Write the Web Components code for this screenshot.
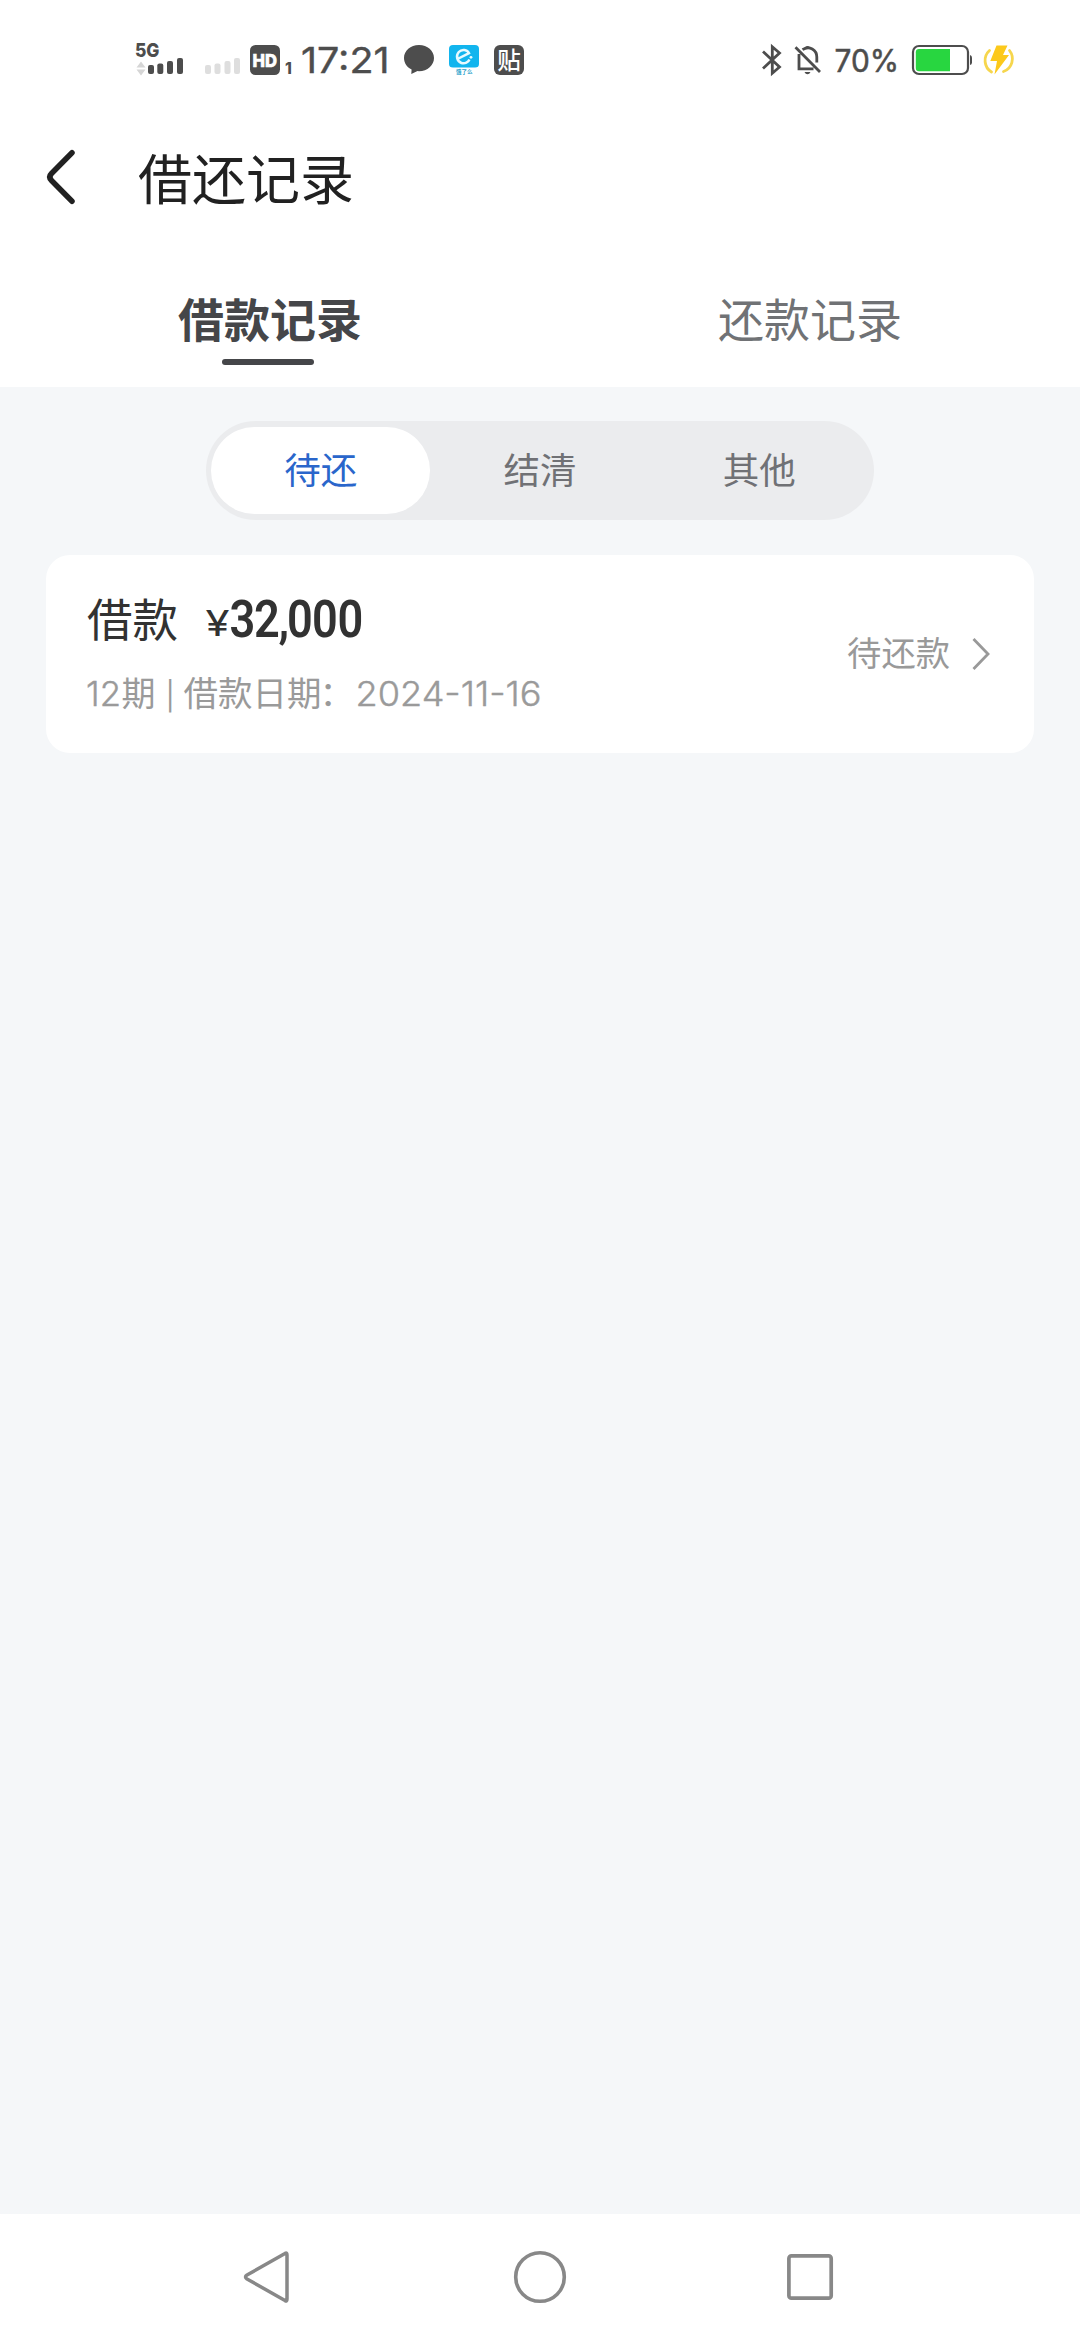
<!DOCTYPE html>
<html lang="zh-CN">
<head>
<meta charset="utf-8">
<title>借还记录</title>
<style>
html,body{margin:0;padding:0;background:#f5f7f9}
body{font-family:Inter,"Noto Sans CJK SC",sans-serif}
</style>
</head>
<body>
<loan-page></loan-page>
<script>
const define = (name, html, init) => customElements.define(name, class extends HTMLElement {
  constructor() {
    super();
    this.attachShadow({mode: 'open'}).innerHTML = html;
  }
  connectedCallback() { if (init) init(this, this.shadowRoot); }
});

define('status-bar', `
<style>
:host{display:flex;height:120px;align-items:flex-start;box-sizing:border-box;padding-top:36px;background:#fff;color:#4d4d4d}
svg{display:block;flex:none;height:48px;font-family:Inter,"Noto Sans CJK SC",sans-serif;overflow:visible}
.left{display:flex;margin-left:130px;flex:1}
.right{display:flex;margin-right:59px}
</style>
<div class="left">
  <svg width="60" viewBox="130 36 60 48" fill="#4d4d4d">
    <text x="135" y="57.300" font-size="19" font-weight="800" textLength="24.500" lengthAdjust="spacingAndGlyphs">5G</text>
    <path d="M136.500 67.500l4.500-6 4.500 6zM136.500 69.500l4.500 6 4.500-6z" fill="#d6d6d6"/>
    <rect x="148" y="65" width="6" height="9" rx="2"/><rect x="157.300" y="63.500" width="6" height="10.500" rx="2"/><rect x="167" y="61" width="6" height="13" rx="2"/><rect x="177" y="58" width="6" height="16" rx="2"/>
  </svg>
  <svg width="55" viewBox="190 36 55 48" fill="#dedede">
    <rect x="205" y="65" width="6" height="9" rx="2"/><rect x="214.500" y="63.500" width="6" height="10.500" rx="2"/><rect x="224.500" y="61" width="6" height="13" rx="2"/><rect x="234" y="58" width="6" height="16" rx="2"/>
  </svg>
  <svg width="55" viewBox="245 36 55 48" fill="#4d4d4d">
    <rect x="250" y="45" width="30" height="30" rx="5.500"/>
    <text x="252.500" y="66.500" fill="#fff" stroke="#fff" stroke-width=".6" font-size="18" font-weight="800" textLength="24.500" lengthAdjust="spacingAndGlyphs">HD</text>
    <text x="285" y="74" font-size="15.500" font-weight="800">1</text>
  </svg>
  <svg width="100" viewBox="300 36 100 48" fill="#4d4d4d">
    <text x="301" y="73" font-size="36" font-weight="400" stroke="#4d4d4d" stroke-width=".4" textLength="88.500" lengthAdjust="spacingAndGlyphs">17:21</text>
  </svg>
  <svg width="45" viewBox="400 36 45 48" fill="#4d4d4d">
    <path d="M419 45c8.500 0 15 5.800 15 13s-6.500 13.200-15 13.200l-1.500-.1-6.200 2.900.3-4.500c-4.700-2.200-7.600-6.500-7.600-11.500 0-7.200 6.500-13 15-13z"/>
  </svg>
  <svg width="45" viewBox="445 36 45 48">
    <path d="M453 45h22q4 0 4 4v15q0 3.500-4 3.500h-22q-4 0-4-3.500V49q0-4 4-4z" fill="#12b5ee"/>
    <path d="M457.500 59l11.500-5.800c-1.600-3.600-7.200-4.600-10.200-1.200-3.200 3.600-1.900 9.400 2.600 11 3.500 1.200 7-.8 8-3.500" fill="none" stroke="#e7faff" stroke-width="2.500"/>
    <circle cx="471" cy="57.300" r="1.400" fill="#e7faff"/>
    <text x="456" y="73.700" fill="#2ba1cb" font-size="5.500" font-weight="700" textLength="16.500">饿了么</text>
  </svg>
  <svg width="40" viewBox="490 36 40 48">
    <rect x="494" y="45" width="30" height="30" rx="6" fill="#4d4d4d"/>
    <text x="497.300" y="68.500" font-size="23.500" font-weight="500" fill="#fff">贴</text>
  </svg>
</div>
<div class="right">
  <svg width="30" viewBox="759 36 30 48" fill="none" stroke="#4d4d4d" stroke-width="2.800">
    <path d="M763 51.500l16.500 15.500-7.200 6.200V46.800l7.200 6.200-16.500 15.500"/>
  </svg>
  <svg width="45" viewBox="789 36 45 48" fill="none" stroke="#4d4d4d" stroke-width="2.800">
    <path d="M795.500 47.300l24.500 24.700M799 54v14.800h14.500M802.500 49.700c7-4.700 14.300.5 14.300 7.300v5.500"/>
    <path d="M804 49q1-3 3.500-3t3.500 3zM804.500 72h6q-1 2.200-3 2.200t-3-2.200z" fill="#4d4d4d" stroke="none"/>
  </svg>
  <svg width="72" viewBox="834 36 72 48" fill="#4d4d4d">
    <text x="834.500" y="72" font-size="30.500" font-weight="400" stroke="#4d4d4d" stroke-width=".5" textLength="64.500" lengthAdjust="spacingAndGlyphs">70%</text>
  </svg>
  <svg width="72" viewBox="906 36 72 48">
    <rect x="913" y="46" width="55" height="28" rx="6" fill="#fff" stroke="#4d4d4d" stroke-width="2.200"/>
    <path d="M919 49h31v22.300h-31q-3.200 0-3.200-3.200V52.200q0-3.200 3.200-3.200z" fill="#28d640"/>
    <path d="M970 55q2 .5 2 2.500v5q0 2-2 2.500z" fill="#4d4d4d"/>
  </svg>
  <svg width="43" viewBox="978 36 43 48">
    <path d="M989.500 50.500a13.500 13.500 0 0 0 2 21.500M1009.500 50.500a13.500 13.500 0 0 1-6 21" fill="none" stroke="#f6d64d" stroke-width="2.800" stroke-linecap="round"/>
    <path d="M996.500 45.500l11 0-4.500 9.500h6l-14.500 19.500 2.500-13.500h-6.700z" fill="#fcc91b"/>
  </svg>
</div>`);

define('title-bar', `
<style>
:host{display:flex;height:120px;align-items:flex-start;background:#fff;color:#212121}
svg{display:block;margin:27px 0 0 40px;width:98px;height:60px}
h1{margin:21px 0 0;font-size:54px;line-height:80px;font-weight:400}
</style>
<svg viewBox="40 147 98 60" fill="none" stroke="#212121" stroke-width="5.500" stroke-linecap="round" stroke-linejoin="round"><path d="M72 152.700L51.500 173.500Q48 177 51.500 180.500L72 201.300"/></svg>
<h1><slot></slot></h1>`);

define('record-tab', `
<style>
:host{display:flex;flex:1;flex-direction:column;align-items:center;font-size:46px;line-height:68px;color:#707275;padding-top:46px}
:host([active]){font-weight:700;color:#454649}
i{display:none;width:92px;height:6px;border-radius:3px;background:#454649;margin:5px 4px 0 0}
:host([active]) i{display:block}
</style>
<span><slot></slot></span><i></i>`);

define('record-tabs', `<style>:host{display:flex;height:147px;background:#fff}</style><slot></slot>`);

define('segment-item', `
<style>
:host{display:flex;flex:1;align-items:center;justify-content:center;border-radius:44px;font-size:36.500px;line-height:54px;color:#707175}
:host([active]){background:#fff;color:#2a66cb}
</style><slot></slot>`);

define('segment-bar', `
<style>:host{display:flex;box-sizing:border-box;width:668px;height:99px;margin:34px auto 0;padding:6px 5px;border-radius:50px;background:#ebecee}</style><slot></slot>`);

define('loan-card', `
<style>
:host{display:flex;box-sizing:border-box;height:198px;margin:35px 46px 0;padding:0 43px 0 40px;border-radius:24px;background:#fff;color:#323232;justify-content:space-between;align-items:center}
.main{display:flex;flex-direction:column;height:198px}
.top{display:flex;height:66px;padding-top:32px;line-height:68px;font-size:45.500px;padding-left:1px}
.top svg{display:block;margin-left:28px;overflow:visible}
.info{margin-top:14px;height:52px;color:#9a9a9a}
.info svg{display:block;overflow:visible}
.state{display:flex;align-items:center;font-size:34.300px;line-height:50px;color:#999;gap:19px}
.state svg{display:block}
</style>
<div class="main">
  <div class="top"><span id="kind"></span>
    <svg width="160" height="66" viewBox="206 587 160 66" fill="#323232">
      <text x="205.500" y="636" font-family="Inter" font-size="36" textLength="24" lengthAdjust="spacingAndGlyphs">¥</text>
      <text id="amount" transform="translate(229.500 636.500) scale(.86 1)" x="0 28.500 57 67 96 125.500" font-family="Roboto" font-size="52.500" font-weight="600"></text>
    </svg>
  </div>
  <div class="info">
    <svg width="460" height="52" viewBox="86 667 460 52" fill="#9a9a9a" font-family='Inter,"Noto Sans CJK SC",sans-serif' font-size="34">
      <text x="86" y="706" id="term" font-weight="300" stroke="#9a9a9a" stroke-width=".4" textLength="35" lengthAdjust="spacingAndGlyphs"></text>
      <text x="121.500" y="706">期</text>
      <text x="165.500" y="706" font-size="28">|</text>
      <text x="183.500" y="706" font-size="34.500">借款日期</text>
      <text x="319.500" y="706" font-size="34.500">：</text>
      <text x="355.500" y="706" id="date" font-weight="300" stroke="#9a9a9a" stroke-width=".4" textLength="186" lengthAdjust="spacingAndGlyphs"></text>
    </svg>
  </div>
</div>
<div class="state"><slot></slot><svg width="22" height="36" viewBox="967 636 22 36" fill="none" stroke="#999" stroke-width="2.800"><path d="M971.500 639l14.500 15-14.500 15"/></svg></div>`,
(host, root) => {
  for (const key of ['kind', 'amount', 'term', 'date']) root.getElementById(key).textContent = host.getAttribute(key);
});

define('nav-bar', `
<style>
:host{display:flex;height:126px;background:#fff;justify-content:center}
svg{display:block;width:270px;height:126px}
</style>
<svg viewBox="135 2214 270 126" fill="none" stroke="#888" stroke-width="3.500" stroke-linejoin="round"><path d="M285 2253.500Q287 2252 287 2255V2299Q287 2302 285 2300.500L247 2279Q244 2277 247 2275z"/></svg>
<svg viewBox="405 2214 270 126" fill="none" stroke="#888" stroke-width="3.600"><circle cx="540" cy="2277" r="24.300"/></svg>
<svg viewBox="675 2214 270 126" fill="none" stroke="#888" stroke-width="3.700"><rect x="788.900" y="2255.900" width="42.300" height="42.300" rx="2.500"/></svg>`);

define('loan-page', `
<style>
:host{display:flex;flex-direction:column;width:1080px;height:2340px;background:#f5f7f9}
main{flex:1}
</style>
<status-bar></status-bar>
<title-bar>借还记录</title-bar>
<record-tabs><record-tab active>借款记录</record-tab><record-tab>还款记录</record-tab></record-tabs>
<main>
  <segment-bar><segment-item active>待还</segment-item><segment-item>结清</segment-item><segment-item>其他</segment-item></segment-bar>
  <loan-card kind="借款" amount="32,000" term="12" date="2024-11-16">待还款</loan-card>
</main>
<nav-bar></nav-bar>`);
</script>
</body>
</html>
